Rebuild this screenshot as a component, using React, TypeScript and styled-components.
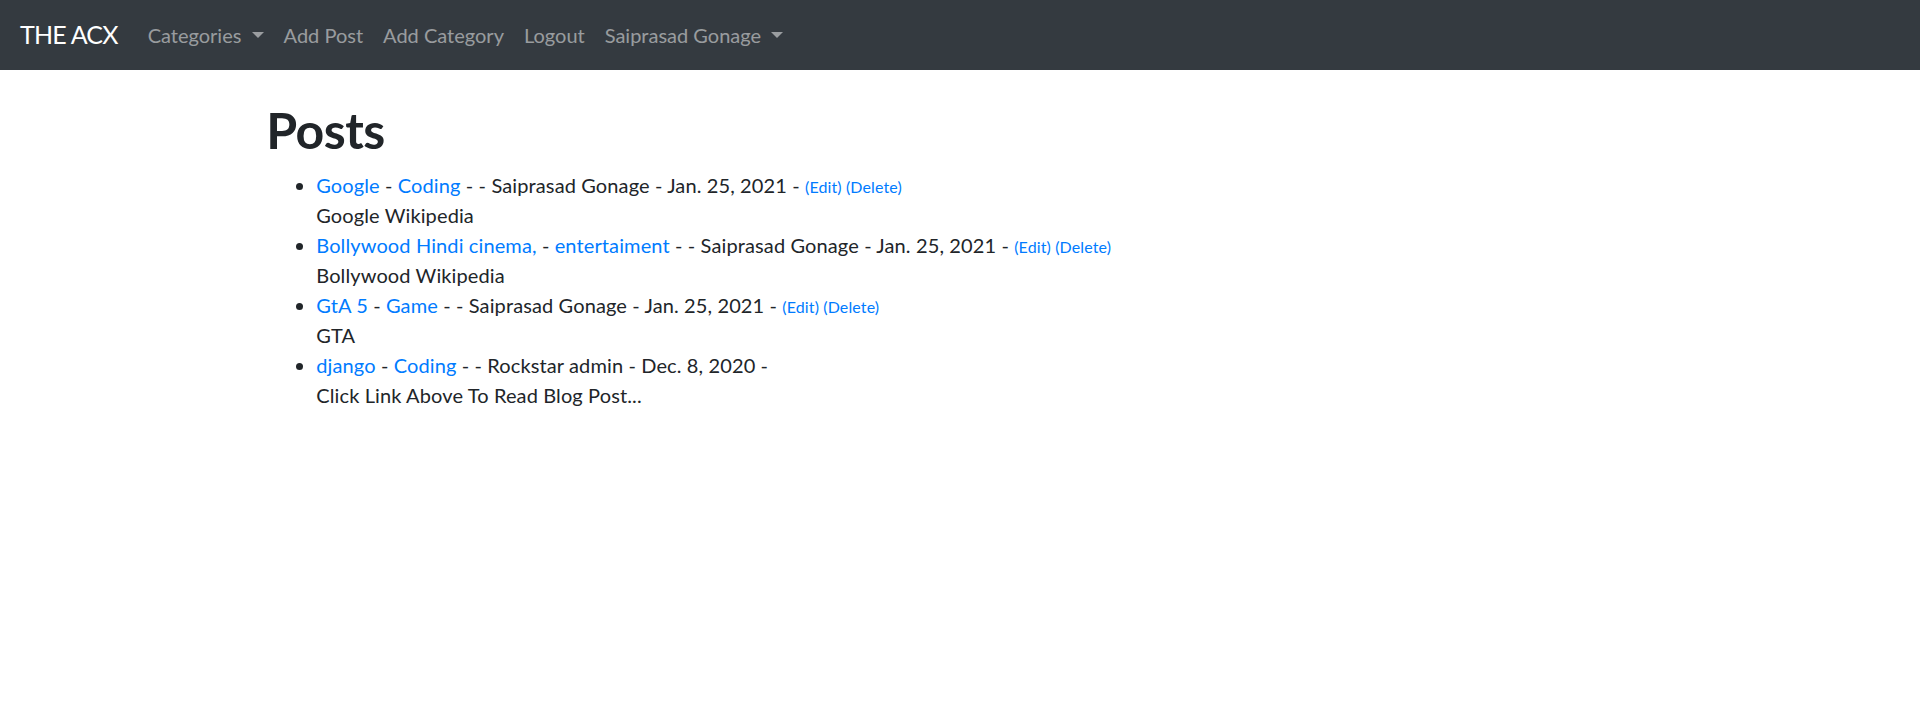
import React from "react";
import styled, { createGlobalStyle } from "styled-components";

const Global = createGlobalStyle`
  html { font-size: 20px; }
  body {
    margin: 0;
    font-family: "Lato", "Open Sans", sans-serif;
    font-size: 20px;
    line-height: 1.5;
    color: #212529;
    background: #fff;
  }
  * { box-sizing: border-box; }
`;

const Navbar = styled.nav`
  display: flex;
  align-items: center;
  height: 70px;
  padding: 10px 20px;
  background: #343a40;
`;

const Brand = styled.a`
  color: #fff;
  font-size: 25px;
  line-height: 37.5px;
  letter-spacing: -0.8px;
  padding: 6.25px 0;
  margin-right: 20px;
  text-decoration: none;
  white-space: nowrap;
`;

const NavList = styled.ul`
  display: flex;
  list-style: none;
  margin: 0;
  padding: 0;
`;

const NavLink = styled.a<{ $dropdown?: boolean }>`
  display: block;
  padding: 10px;
  color: rgba(255, 255, 255, 0.5);
  text-decoration: none;
  font-size: 20px;
  line-height: 30px;
  white-space: pre;
  ${(p) =>
    p.$dropdown &&
    `
    &::after {
      content: "";
      display: inline-block;
      margin-left: 0.255em;
      vertical-align: 0.255em;
      border-top: 0.3em solid;
      border-right: 0.3em solid transparent;
      border-left: 0.3em solid transparent;
      border-bottom: 0;
    }
  `}
`;

const Container = styled.main`
  max-width: 1425px;
  margin: 0 auto;
  padding: 30px 18.75px 0;
`;

const Title = styled.h1`
  font-size: 50px;
  font-weight: 700;
  letter-spacing: -0.5px;
  line-height: 1.2;
  margin: 0 0 10px;
`;

const PostList = styled.ul`
  margin: 0 0 20px;
  padding-left: 50px;
  letter-spacing: 0.12px;
`;

const Item = styled.li``;

const Link = styled.a`
  color: #007bff;
  text-decoration: none;
`;

const Small = styled.small`
  font-size: 80%;
`;

type Post = {
  title: string;
  category: string;
  author: string;
  date: string;
  body: string;
  editable: boolean;
};

const posts: Post[] = [
  { title: "Google", category: "Coding", author: "Saiprasad Gonage", date: "Jan. 25, 2021", body: "Google Wikipedia", editable: true },
  { title: "Bollywood Hindi cinema,", category: "entertaiment", author: "Saiprasad Gonage", date: "Jan. 25, 2021", body: "Bollywood Wikipedia", editable: true },
  { title: "GtA 5", category: "Game", author: "Saiprasad Gonage", date: "Jan. 25, 2021", body: "GTA", editable: true },
  { title: "django", category: "Coding", author: "Rockstar admin", date: "Dec. 8, 2020", body: "Click Link Above To Read Blog Post...", editable: false },
];

export default function App() {
  return (
    <>
      <Global />
      <Navbar>
        <Brand href="#">THE ACX</Brand>
        <NavList>
          <li><NavLink href="#" $dropdown>{"Categories "}</NavLink></li>
          <li><NavLink href="#">Add Post</NavLink></li>
          <li><NavLink href="#">Add Category</NavLink></li>
          <li><NavLink href="#">Logout</NavLink></li>
          <li><NavLink href="#" $dropdown>{"Saiprasad Gonage "}</NavLink></li>
        </NavList>
      </Navbar>
      <Container>
        <Title>Posts</Title>
        <PostList>
          {posts.map((p) => (
            <Item key={p.title}>
              <Link href="#">{p.title}</Link> - <Link href="#">{p.category}</Link> - - {p.author} - {p.date} -{" "}
              {p.editable && (
                <Small>
                  <Link href="#">(Edit)</Link> <Link href="#">(Delete)</Link>
                </Small>
              )}
              <br />
              {p.body}
            </Item>
          ))}
        </PostList>
      </Container>
    </>
  );
}
